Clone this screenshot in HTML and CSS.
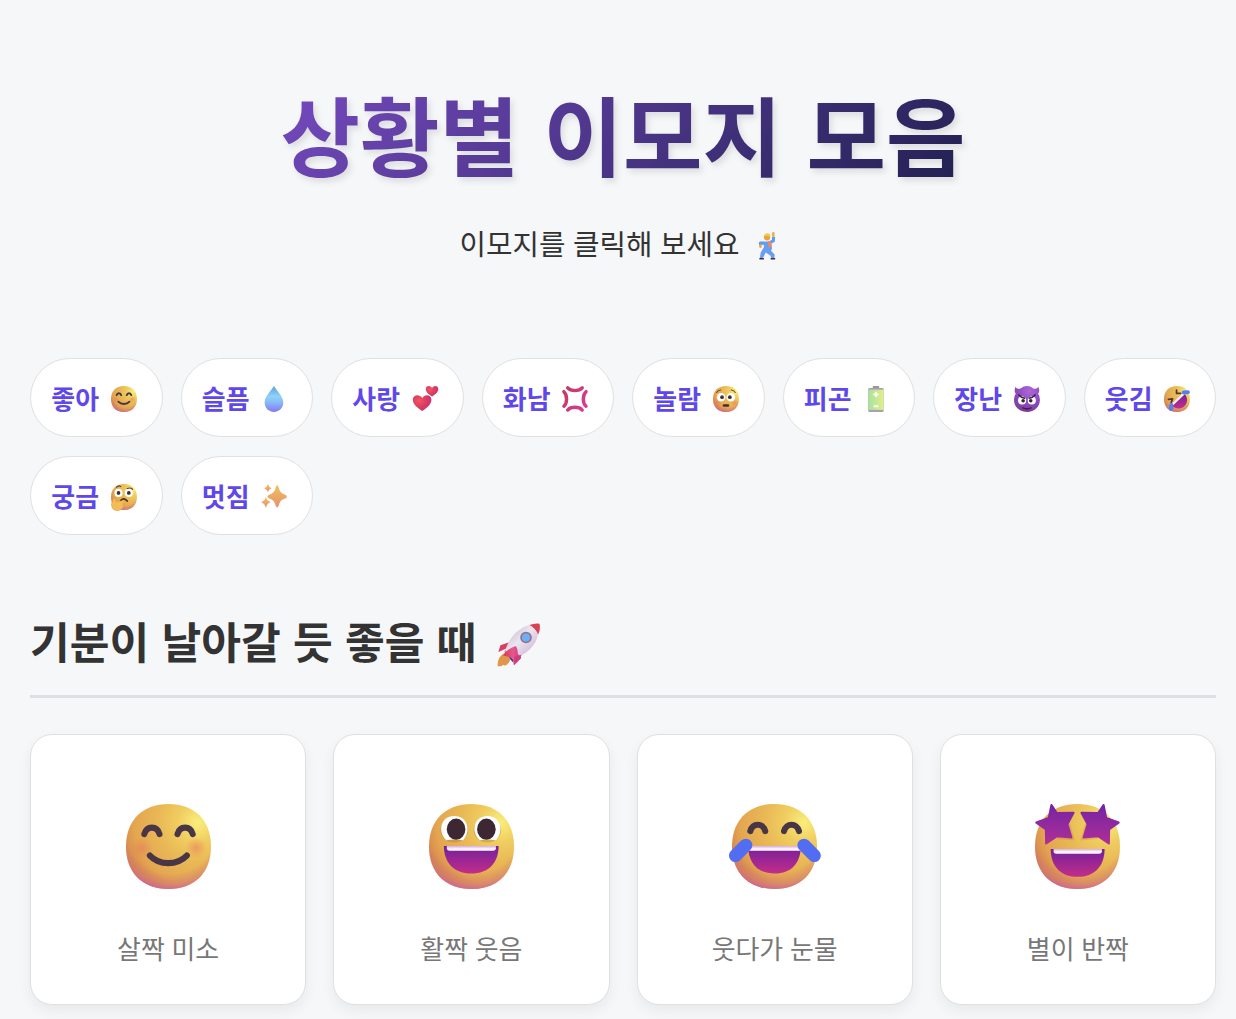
FILE: index.html
```html
<!DOCTYPE html>
<html lang="ko">
<head>
    <meta charset="UTF-8">
    <meta name="viewport" content="width=device-width, initial-scale=1.0">
    <title>상황별 이모지 모음</title>
    <link rel="stylesheet" href="styles.css">
</head>
<body>
    <svg class="defs" width="0" height="0">
        <defs>
            <radialGradient id="face" gradientUnits="userSpaceOnUse" cx="27" cy="7" r="30">
                <stop offset="0" stop-color="#faee7c"/>
                <stop offset=".25" stop-color="#f0cd60"/>
                <stop offset=".5" stop-color="#e9b855"/>
                <stop offset=".8" stop-color="#e4a650"/>
                <stop offset="1" stop-color="#d4834f"/>
            </radialGradient>
            <radialGradient id="chin" gradientUnits="userSpaceOnUse" cx="17" cy="9" r="24">
                <stop offset=".72" stop-color="#cf6a78" stop-opacity="0"/>
                <stop offset=".88" stop-color="#d07280" stop-opacity=".5"/>
                <stop offset="1" stop-color="#d05ba8"/>
            </radialGradient>
            <radialGradient id="blush">
                <stop offset="0" stop-color="#e6785e" stop-opacity=".55"/>
                <stop offset="1" stop-color="#e6785e" stop-opacity="0"/>
            </radialGradient>
            <linearGradient id="mouth" x1="0" y1="0" x2="0" y2="1">
                <stop offset="0" stop-color="#73209b"/>
                <stop offset="1" stop-color="#c32d8a"/>
            </linearGradient>
            <linearGradient id="teeth" x1="0" y1="0" x2="0" y2="1">
                <stop offset="0" stop-color="#d5a8e8"/>
                <stop offset=".6" stop-color="#fcf6ff"/>
            </linearGradient>
            <linearGradient id="star" x1="0" y1="0" x2="0" y2="1">
                <stop offset="0" stop-color="#7424a5"/>
                <stop offset="1" stop-color="#ae2f96"/>
            </linearGradient>
            <linearGradient id="drop" x1="0" y1="0" x2="0" y2="1">
                <stop offset="0" stop-color="#5c9fd8"/>
                <stop offset=".4" stop-color="#8fd3fa"/>
                <stop offset=".65" stop-color="#86b8f8"/>
                <stop offset="1" stop-color="#8578f5"/>
            </linearGradient>
            <radialGradient id="heart" cx=".35" cy=".35" r=".75">
                <stop offset="0" stop-color="#ee5666"/>
                <stop offset=".5" stop-color="#dd3d5c"/>
                <stop offset="1" stop-color="#bd3180"/>
            </radialGradient>
            <linearGradient id="anger" gradientUnits="userSpaceOnUse" x1="0" y1="0" x2="32" y2="20">
                <stop offset="0" stop-color="#c43a57"/>
                <stop offset="1" stop-color="#d63b96"/>
            </linearGradient>
            <linearGradient id="battery" x1="0" y1="0" x2="1" y2="0">
                <stop offset="0" stop-color="#a8e09d"/>
                <stop offset="1" stop-color="#e0f08b"/>
            </linearGradient>
            <radialGradient id="devil" cx=".6" cy=".2" r=".9">
                <stop offset="0" stop-color="#ae66d9"/>
                <stop offset=".6" stop-color="#8848b8"/>
                <stop offset="1" stop-color="#7a3590"/>
            </radialGradient>
            <linearGradient id="sparkle" x1="0" y1="0" x2="0" y2="1">
                <stop offset="0" stop-color="#edc45f"/>
                <stop offset="1" stop-color="#e98d6d"/>
            </linearGradient>
            <linearGradient id="rocket" x1="0" y1="0" x2="1" y2="1">
                <stop offset="0" stop-color="#bcb2c2"/>
                <stop offset=".45" stop-color="#ece4f0"/>
                <stop offset="1" stop-color="#c9a6c9"/>
            </linearGradient>
            <linearGradient id="fin" x1="0" y1="0" x2="1" y2="0">
                <stop offset="0" stop-color="#d83a58"/>
                <stop offset=".55" stop-color="#e5578c"/>
                <stop offset="1" stop-color="#cb3784"/>
            </linearGradient>

            <symbol id="head" viewBox="0 0 32 32">
                <path d="M16 0C26 0 32 6.300 32 16S26 32 16 32 0 25.700 0 16 6 0 16 0Z" fill="url(#face)"/>
                <path d="M16 0C26 0 32 6.300 32 16S26 32 16 32 0 25.700 0 16 6 0 16 0Z" fill="url(#chin)"/>
            </symbol>

            <symbol id="smile" viewBox="0 0 32 32" overflow="visible">
                <use href="#head" width="32" height="32"/>
                <circle cx="6" cy="16.600" r="4" fill="url(#blush)"/>
                <circle cx="26.400" cy="16.400" r="4" fill="url(#blush)"/>
                <g fill="none" stroke="#483647" stroke-linecap="round">
                    <path stroke-width="2.300" d="M6.900 11.300C7.800 8.100 11.700 8.100 12.600 11.300M19.400 11.300C20.300 8.100 24.200 8.100 25.100 11.300"/>
                    <path stroke-width="2.300" d="M9 19.400C12.600 23.200 19.200 23.200 22.900 19.400"/>
                </g>
            </symbol>

            <symbol id="grin" viewBox="0 0 32 32" overflow="visible">
                <use href="#head" width="32" height="32"/>
                <g fill="#9f6534" opacity=".3">
                    <ellipse cx="9.500" cy="9.900" rx="5.200" ry="4.600"/>
                    <ellipse cx="22" cy="9.900" rx="5.200" ry="4.600"/>
                </g>
                <g fill="#fff">
                    <path d="M6.500 13.600C3.200 10.500 4.200 4.500 9.500 4.500S15.900 10.500 12.800 13.600Q9.500 13.100 6.500 13.600Z"/>
                    <path d="M19.100 13.600C15.600 10.500 16.900 4.500 22 4.500S28.300 10.500 25.200 13.600Q22 13.100 19.100 13.600Z"/>
                </g>
                <g fill="#3c2732">
                    <ellipse cx="10.200" cy="9.500" rx="3.500" ry="4"/>
                    <ellipse cx="21.600" cy="9.500" rx="3.500" ry="4"/>
                </g>
                <path d="M5.600 15.800H26.200C26.200 22 22.500 26.200 15.900 26.200S5.600 22 5.600 15.800Z" fill="url(#mouth)"/>
                <path d="M6.700 15.800H25.200V16.700Q25.200 17.600 24.300 17.600H7.600Q6.700 17.600 6.700 16.700Z" fill="url(#teeth)"/>
            </symbol>

            <symbol id="joy" viewBox="0 0 32 32" overflow="visible">
                <use href="#head" width="32" height="32"/>
                <path fill="none" stroke="#483647" stroke-width="2.300" stroke-linecap="round" d="M6.900 10.200C7.800 7 11.700 7 12.500 10.200M19.600 10.200C20.400 7 24.400 7 25.200 10.200"/>
                <path d="M6.100 15.800H25.900C25.900 22 22.500 26.200 16 26.200S6.100 22 6.100 15.800Z" fill="url(#mouth)"/>
                <path d="M6.100 15.800H25.900V17.600H6.200Z" fill="url(#teeth)"/>
                <path fill="none" stroke="#526cf2" stroke-width="4.900" stroke-linecap="round" d="M1.300 19.400L5.200 15.500M27.100 15.500L31 19.400"/>
            </symbol>

            <symbol id="starry" viewBox="0 0 32 32" overflow="visible">
                <use href="#head" width="32" height="32"/>
                <path fill="none" stroke="#9b5631" stroke-opacity=".18" stroke-width="1.400" d="M12.600 7.600L14 13 8.400 12.500M19.400 7.600L18 13 23.600 12.500"/>
                <g fill="url(#star)" stroke="url(#star)" stroke-width=".8" stroke-linejoin="round">
                    <path d="M6.200 .4L8.200 3.400 14.500 3.300 12.200 7.600 13.700 12.600 8.300 12.100 4.200 14.800 4.100 9.600.5 7 5.200 5.300Z"/>
                    <path d="M25.800 .4L23.800 3.400 17.500 3.300 19.800 7.600 18.300 12.600 23.700 12.100 27.800 14.800 27.900 9.600 31.500 7 26.800 5.300Z"/>
                </g>
                <path d="M5.900 16.900H26.200C26.200 23.200 22.500 27.400 16 27.400S5.900 23.200 5.900 16.900Z" fill="url(#mouth)"/>
                <path d="M7 16.900H25.200V17.800Q25.200 18.700 24.300 18.700H8Q7 18.700 7 17.800Z" fill="url(#teeth)"/>
            </symbol>

            <symbol id="dancer" viewBox="0 0 32 32" overflow="visible">
                <path fill="none" stroke="#5c9cf0" stroke-width="3.400" stroke-linejoin="round" d="M12 13.500L7 13.500 7.500 16M17.500 13L21.500 11 21.800 6.500"/>
                <path fill="#699df0" d="M11 12L19 11.500 20 19.500 19 22 23 26 22.500 30 19 30 18.500 27.500 13 24 10 30 6.500 30 7.500 24 11 18Z"/>
                <path fill="#e58b68" d="M15.500 11.500H19L19.500 18H16Z"/>
                <circle cx="14.500" cy="7" r="3.500" fill="#e9a343"/>
                <path d="M10.800 6.500Q11.500 2.500 15 2.600T18 6L13 5.300Z" fill="#f4c943"/>
                <path fill="none" stroke="#eeaa45" stroke-width="2.800" stroke-linecap="round" d="M21.500 5.200V2.500M7.200 16V17.500"/>
                <path fill="none" stroke="#3d3144" stroke-width="1.700" d="M6 30.800H11M18.500 30.800H23.500"/>
            </symbol>

            <symbol id="drop-icon" viewBox="0 0 32 32">
                <path d="M16 0C12.500 6 4.500 12.500 4.500 20.500 4.500 27 9.300 32 16 32S27.500 27 27.500 20.500C27.500 12.500 19.500 6 16 0Z" fill="url(#drop)"/>
            </symbol>

            <symbol id="hearts" viewBox="0 0 32 32" overflow="visible">
                <path d="M12.700 31C9.500 28.700 1 23.500 1 17 1 10.500 9.400 9.500 12.700 14.800 16 9.500 24 10.500 24 17 24 23.500 16 28.700 12.700 31Z" fill="url(#heart)"/>
                <path d="M24.800 13C22.500 11.500 17 8 17 4C17-.800 22.800-1.200 24.800 2.500C26.800-1.200 32.500-.800 32.500 4C32.500 8 27 11.500 24.800 13Z" fill="url(#heart)"/>
            </symbol>

            <symbol id="anger-icon" viewBox="0 0 32 32" overflow="visible">
                <path fill="none" stroke="url(#anger)" stroke-width="4.200" stroke-linecap="round" d="M7 2.300C11 6.800 21 6.800 25 2.300M7 29.700C11 25.200 21 25.200 25 29.700M2.300 7C6.800 11 6.800 21 2.300 25M29.700 7C25.200 11 25.200 21 29.700 25"/>
            </symbol>

            <symbol id="flushed" viewBox="0 0 32 32" overflow="visible">
                <use href="#head" width="32" height="32"/>
                <circle cx="5" cy="21" r="5" fill="url(#blush)"/>
                <circle cx="27" cy="21" r="5" fill="url(#blush)"/>
                <g fill="#fff">
                    <circle cx="10" cy="13.800" r="5.300"/>
                    <circle cx="22" cy="13.800" r="5.300"/>
                </g>
                <g fill="#452d37">
                    <circle cx="11.200" cy="13.800" r="2.300"/>
                    <circle cx="20.800" cy="13.800" r="2.300"/>
                    <rect x="12" y="22.500" width="8" height="3" rx="1.500"/>
                </g>
                <path fill="none" stroke="#694232" stroke-width="1.300" stroke-linecap="round" d="M4.500 8Q6.500 5 9.500 5M27.500 8Q25.500 5 22.500 5"/>
            </symbol>

            <symbol id="battery-icon" viewBox="0 0 32 32">
                <rect x="12" y="0" width="8" height="4" rx="1" fill="#9d939f"/>
                <rect x="6.500" y="2.500" width="19" height="29.500" rx="1.500" fill="#a9a0b2"/>
                <rect x="6.500" y="4.500" width="19" height="25" fill="url(#battery)"/>
                <path stroke="#fff" stroke-width="2.600" stroke-linecap="round" d="M14 10.500H18M16 8.500V12.500M14.200 25H17.800"/>
            </symbol>

            <symbol id="devil-icon" viewBox="0 0 32 32" overflow="visible">
                <path d="M2 .8Q3.500 4.500 8 3 12 0 16 0T24 3Q28.500 4.500 30 .8 32.500 6 29.800 9.500 32 12 32 17C32 26 25 32 16 32S0 26 0 17Q0 12 2.200 9.500-.5 6 2 .8Z" fill="url(#devil)"/>
                <g fill="#fff">
                    <circle cx="10" cy="18" r="5"/>
                    <circle cx="22" cy="18" r="5"/>
                </g>
                <g fill="#352238">
                    <circle cx="11.300" cy="18.300" r="2.200"/>
                    <circle cx="20.700" cy="18.300" r="2.200"/>
                </g>
                <path fill="none" stroke="#402247" stroke-width="2" stroke-linecap="round" d="M6 11Q9 14.500 13 15M26 11Q23 14.500 19 15M11 27Q16 29.500 21 27"/>
            </symbol>

            <symbol id="rofl" viewBox="0 0 32 32" overflow="visible">
                <use href="#head" width="32" height="32"/>
                <path d="M9 24L25 9C29 14 30 19 26 24S15 29 9 24Z" fill="url(#mouth)"/>
                <path d="M9 22.500L23.500 8.500 25.800 10.200 10.700 24.500Z" fill="#f8edf8"/>
                <path fill="none" stroke="#503635" stroke-width="2.200" stroke-linecap="round" stroke-linejoin="round" d="M5.500 16.500L10.500 16 9 20M15.500 5L15.500 9.200 20.500 9"/>
                <path fill="none" stroke="#547ff0" stroke-width="5" stroke-linecap="round" d="M9 23.500L8.700 28.500M24.500 8L29.500 7.700"/>
            </symbol>

            <symbol id="thinking" viewBox="0 0 32 32" overflow="visible">
                <use href="#head" width="32" height="32"/>
                <g fill="#fff">
                    <circle cx="9.300" cy="11" r="5"/>
                    <circle cx="22" cy="11" r="5"/>
                </g>
                <g fill="#432a31">
                    <circle cx="9.300" cy="11" r="2.300"/>
                    <circle cx="22" cy="11" r="2.300"/>
                </g>
                <path fill="none" stroke="#62412f" stroke-width="1.500" stroke-linecap="round" d="M7 4Q9 1.500 12 3M20 5.500Q24 4 26.500 6.500"/>
                <path fill="none" stroke="#4b302e" stroke-width="2.200" stroke-linecap="round" d="M12 20.500Q16 16 20 21"/>
                <path fill="#f3bc56" stroke="#d89846" stroke-width=".6" d="M3 17.500Q6 17 6.300 22L15 20.500Q18 20.500 17.500 23 17 24.500 14.500 24.500 16.500 26 15 27.500 15.500 30 13 31 10 34 5 32.500 .5 31 .5 25Z"/>
            </symbol>

            <symbol id="sparkles" viewBox="0 0 32 32" overflow="visible">
                <g fill="url(#sparkle)">
                    <path d="M20 1.500Q21.200 1.500 21.800 4C23.300 9.800 25 11.500 30.500 13.500Q33.500 15.500 30.500 17.500C25 19.500 23.300 21 21.800 27Q20 31 18.200 27C16.700 21 15 19.500 9.500 17.500Q6.500 15.500 9.500 13.500C15 11.500 16.700 9.800 18.200 4Q18.800 1.500 20 1.500Z"/>
                    <path d="M8.500 0Q9.500 4 13 5.200 9.500 6.300 8.500 10 7.500 6.300 4 5.200 7.500 4 8.500 0Z"/>
                    <path d="M6 15.500Q7.200 21 12 22.500 7.200 24 6 29.500 4.800 24 0 22.500 4.800 21 6 15.500Z"/>
                </g>
            </symbol>

            <symbol id="rocket-icon" viewBox="0 0 32 32" overflow="visible">
                <path d="M6 22Q0 25 .5 32 4 32.500 4.500 31 7 33 10 27Z" fill="#e1964b"/>
                <path d="M5.500 21L11.500 29 12.500 27 7 19.500Z" fill="#46408a"/>
                <path d="M24 1.500C15 4 9 11 6 21L11.500 26.500C21.500 24 29 17 30.500 8Z" fill="url(#rocket)"/>
                <path d="M24 1.500Q28 0 31.500.5 32.500 4 30.500 8.500 28.500 4 24 1.500Z" fill="#d94154"/>
                <circle cx="21.500" cy="10.700" r="4.300" fill="#85798e"/>
                <circle cx="21.500" cy="10.700" r="3" fill="#72adf8"/>
                <path d="M8.500 14.500L2.500 16.500 1 21.500 6.500 19Z" fill="#d93e65"/>
                <path d="M14 17Q15.500 19 15.500 23L18 26 12.500 31.500 11.500 26 4.500 24Q7.500 19 14 17Z" fill="url(#fin)"/>
                <path d="M18 23.500L17.500 26 12.500 31 13 25Z" fill="#d13b7c"/>
            </symbol>
        </defs>
    </svg>

    <header>
        <h1>상황별 이모지 모음</h1>
        <p class="subtitle">이모지를 클릭해 보세요 <svg class="emoji"><use href="#dancer"/></svg></p>
    </header>

    <nav class="categories">
        <a href="#good">좋아 <svg class="emoji"><use href="#smile"/></svg></a>
        <a href="#sad">슬픔 <svg class="emoji"><use href="#drop-icon"/></svg></a>
        <a href="#love">사랑 <svg class="emoji"><use href="#hearts"/></svg></a>
        <a href="#angry">화남 <svg class="emoji"><use href="#anger-icon"/></svg></a>
        <a href="#surprise">놀람 <svg class="emoji"><use href="#flushed"/></svg></a>
        <a href="#tired">피곤 <svg class="emoji"><use href="#battery-icon"/></svg></a>
        <a href="#playful">장난 <svg class="emoji"><use href="#devil-icon"/></svg></a>
        <a href="#funny">웃김 <svg class="emoji"><use href="#rofl"/></svg></a>
        <a href="#curious">궁금 <svg class="emoji"><use href="#thinking"/></svg></a>
        <a href="#cool">멋짐 <svg class="emoji"><use href="#sparkles"/></svg></a>
    </nav>

    <section id="good">
        <h2>기분이 날아갈 듯 좋을 때 <svg class="emoji"><use href="#rocket-icon"/></svg></h2>
        <div class="emoji-grid">
            <div class="card">
                <svg class="big"><use href="#smile"/></svg>
                <span>살짝 미소</span>
            </div>
            <div class="card">
                <svg class="big"><use href="#grin"/></svg>
                <span>활짝 웃음</span>
            </div>
            <div class="card">
                <svg class="big"><use href="#joy"/></svg>
                <span>웃다가 눈물</span>
            </div>
            <div class="card">
                <svg class="big"><use href="#starry"/></svg>
                <span>별이 반짝</span>
            </div>
        </div>
    </section>
</body>
</html>
```
FILE: styles.css
```css
html {
    font-size: 28.8px;
}
body {
    margin: 0;
    padding: 75px 20px 40px 30px;
    background-color: #f6f7f9;
    color: #333;
    font-family: "Noto Sans", "Noto Sans CJK KR", sans-serif;
    height: 1019px;
    box-sizing: border-box;
    overflow: hidden;
}
.defs {
    position: absolute;
}
header {
    text-align: center;
}
h1 {
    margin: 0 auto;
    width: fit-content;
    font-size: 3rem;
    font-weight: 700;
    line-height: 124px;
    word-spacing: 0.025em;
    color: transparent;
    background: linear-gradient(135deg, #764ac0, #20204f);
    -webkit-background-clip: text;
    background-clip: text;
    filter: drop-shadow(3px 4px 3px rgba(0, 0, 0, 0.1));
}
.subtitle {
    margin: 24px 0 0;
    font-size: 1rem;
    line-height: 42px;
}
.emoji {
    width: 1em;
    height: 1em;
    margin: 0 0.185em;
    vertical-align: -0.15em;
    overflow: visible;
}
.subtitle .emoji {
    margin: 0 0.13em 0 0.24em;
}
.categories {
    display: grid;
    grid-template-columns: repeat(8, 1fr);
    gap: 18.5px 18px;
    margin-top: 93px;
}
.categories a {
    display: flex;
    align-items: center;
    justify-content: center;
    height: 79.4px;
    box-sizing: border-box;
    border: 1px solid #e0e0e0;
    border-radius: 50px;
    background-color: #fff;
    color: #5f48ea;
    font-size: 0.9rem;
    font-weight: 700;
    text-decoration: none;
    white-space: pre;
}
.categories .emoji {
    margin-top: 3px;
}
section {
    margin-top: 72px;
}
h2 {
    margin: 0 0 36px;
    padding-bottom: 16px;
    border-bottom: 3px solid #dedfe2;
    font-size: 1.5rem;
    font-weight: 700;
    line-height: 72px;
    word-spacing: 0.025em;
}
.emoji-grid {
    display: grid;
    grid-template-columns: repeat(4, 1fr);
    gap: 27px;
}
.card {
    display: flex;
    flex-direction: column;
    align-items: center;
    height: 271px;
    box-sizing: border-box;
    padding-top: 69px;
    border: 1px solid #e0e0e0;
    border-radius: 22px;
    background-color: #fff;
    box-shadow: 0 6px 14px rgba(0, 0, 0, 0.06);
}
.big {
    width: 85px;
    height: 85px;
    overflow: visible;
}
.card span {
    margin-top: 41px;
    color: #777;
    font-size: 0.9rem;
    line-height: 38px;
}
```
